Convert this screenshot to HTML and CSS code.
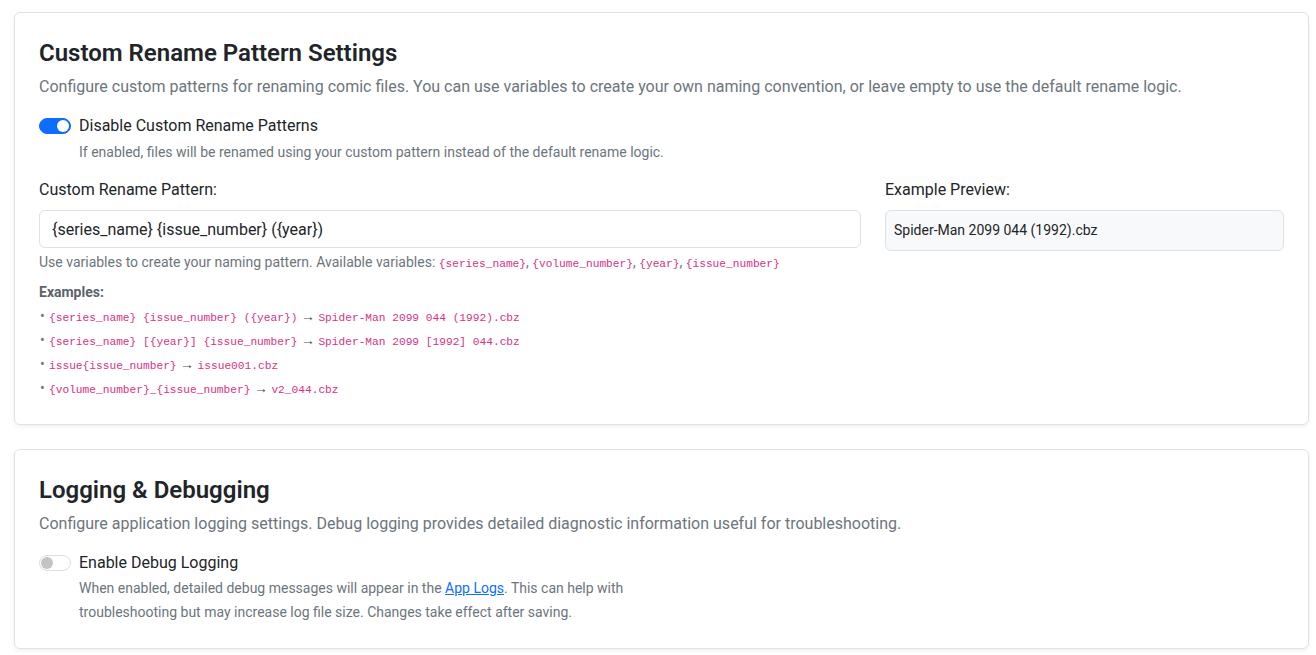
FILE: index.html
```html
<!DOCTYPE html>
<html>
<head>
<meta charset="utf-8">
<link rel="stylesheet" href="styles.css">
</head>
<body>
<div class="page">
  <section class="card">
    <h4 class="card-title">Custom Rename Pattern Settings</h4>
    <p class="lead-muted">Configure custom patterns for renaming comic files. You can use variables to create your own naming convention, or leave empty to use the default rename logic.</p>

    <div class="switch-row">
      <span class="switch on"><span class="knob"></span></span>
      <span class="switch-label">Disable Custom Rename Patterns</span>
    </div>
    <div class="switch-help">If enabled, files will be renamed using your custom pattern instead of the default rename logic.</div>

    <div class="row">
      <div class="col col-8">
        <label class="field-label">Custom Rename Pattern:</label>
        <input class="text-input" type="text" value="{series_name} {issue_number} ({year})">
        <div class="form-text">Use variables to create your naming pattern. Available variables: <code>{series_name}</code>, <code>{volume_number}</code>, <code>{year}</code>, <code>{issue_number}</code></div>
        <div class="examples">
          <div class="examples-title">Examples:</div>
          <div class="example"><span class="bullet">•</span><code>{series_name} {issue_number} ({year})</code> <span class="arrow">→</span> <code>Spider-Man 2099 044 (1992).cbz</code></div>
          <div class="example"><span class="bullet">•</span><code>{series_name} [{year}] {issue_number}</code> <span class="arrow">→</span> <code>Spider-Man 2099 [1992] 044.cbz</code></div>
          <div class="example"><span class="bullet">•</span><code>issue{issue_number}</code> <span class="arrow">→</span> <code>issue001.cbz</code></div>
          <div class="example"><span class="bullet">•</span><code>{volume_number}_{issue_number}</code> <span class="arrow">→</span> <code>v2_044.cbz</code></div>
        </div>
      </div>
      <div class="col col-4">
        <label class="field-label">Example Preview:</label>
        <div class="preview">Spider-Man 2099 044 (1992).cbz</div>
      </div>
    </div>
  </section>

  <section class="card">
    <h4 class="card-title">Logging &amp; Debugging</h4>
    <p class="lead-muted">Configure application logging settings. Debug logging provides detailed diagnostic information useful for troubleshooting.</p>
    <div class="row row-flush">
      <div class="col col-6">
        <div class="switch-row">
          <span class="switch off"><span class="knob"></span></span>
          <span class="switch-label">Enable Debug Logging</span>
        </div>
        <div class="switch-help tall">When enabled, detailed debug messages will appear in the <a href="#" class="link">App Logs</a>. This can help with troubleshooting but may increase log file size. Changes take effect after saving.</div>
      </div>
    </div>
  </section>
</div>
</body>
</html>
```
FILE: styles.css
```css
* { box-sizing: border-box; }

body {
  margin: 0;
  background: #ffffff;
  font-family: Roboto, "Liberation Sans", sans-serif;
  font-size: 16px;
  line-height: 24px;
  color: #212529;
}

.page {
  padding: 12px 7px 0 14px;
}

.card {
  border: 1px solid #dfe2e6;
  border-radius: 6px;
  box-shadow: 0 2px 4px rgba(0, 0, 0, 0.06);
  padding: 24px;
  margin-bottom: 24px;
  background: #fff;
}

.card-title {
  margin: 0 0 6px;
  font-size: 24px;
  font-weight: 600;
  line-height: 32px;
  color: #212529;
}

.lead-muted {
  margin: 0 0 15px;
  color: #6c757d;
}

.switch-row {
  display: flex;
  align-items: flex-start;
  gap: 8px;
}

.switch {
  position: relative;
  flex: none;
  width: 32px;
  height: 16px;
  margin-top: 4px;
  border-radius: 8px;
}

.switch .knob {
  position: absolute;
  top: 1px;
  width: 12px;
  height: 12px;
  border-radius: 50%;
}

.switch.on {
  background: #0d6efd;
  border: 1px solid #0d6efd;
}

.switch.on .knob {
  right: 1px;
  background: #fff;
}

.switch.off {
  background: #fff;
  border: 1px solid #dcdde0;
}

.switch.off .knob {
  left: 1px;
  background: #c4c4c4;
}

.switch-label {
  color: #212529;
}

.switch-help {
  margin-top: 4px;
  padding-left: 40px;
  font-size: 14px;
  line-height: 21px;
  color: #6c757d;
}

.switch-help.tall {
  margin-top: 1px;
  line-height: 24px;
}

.link {
  color: #0d6efd;
  text-decoration: underline;
}

.row {
  display: flex;
  margin: 15px -12px 0;
}

.row-flush { margin-top: 0; }

.col {
  padding: 0 12px;
}

.col-8 { width: 66.6667%; }
.col-4 { width: 33.3333%; }
.col-6 { width: 50%; }

.field-label {
  display: block;
  margin-bottom: 8px;
  color: #212529;
}

.text-input {
  display: block;
  width: 100%;
  height: 38px;
  padding: 6px 12px;
  border: 1px solid #dee2e6;
  border-radius: 6px;
  font-family: Roboto, "Liberation Sans", sans-serif;
  font-size: 16px;
  line-height: 24px;
  color: #212529;
  background: #fff;
  outline: none;
}

.form-text {
  margin-top: 4px;
  font-size: 14px;
  line-height: 21px;
  color: #6c757d;
}

code {
  font-family: "Liberation Mono", "DejaVu Sans Mono", monospace;
  font-size: 11.2px;
  line-height: 1;
  color: #d63384;
}

.examples {
  margin-top: 7px;
  font-size: 14px;
  line-height: 24px;
  color: #6c757d;
}

.examples-title {
  font-weight: 700;
  color: #5c636a;
}

.example {
  height: 24px;
}

.bullet {
  display: inline-block;
  width: 10px;
  padding-left: 1px;
}

.arrow {
  color: #495057;
}

.preview {
  padding: 9px 8px;
  background: #f8f9fa;
  border: 1px solid #dee2e6;
  border-radius: 6px;
  font-size: 14px;
  line-height: 21px;
  color: #212529;
}
```
